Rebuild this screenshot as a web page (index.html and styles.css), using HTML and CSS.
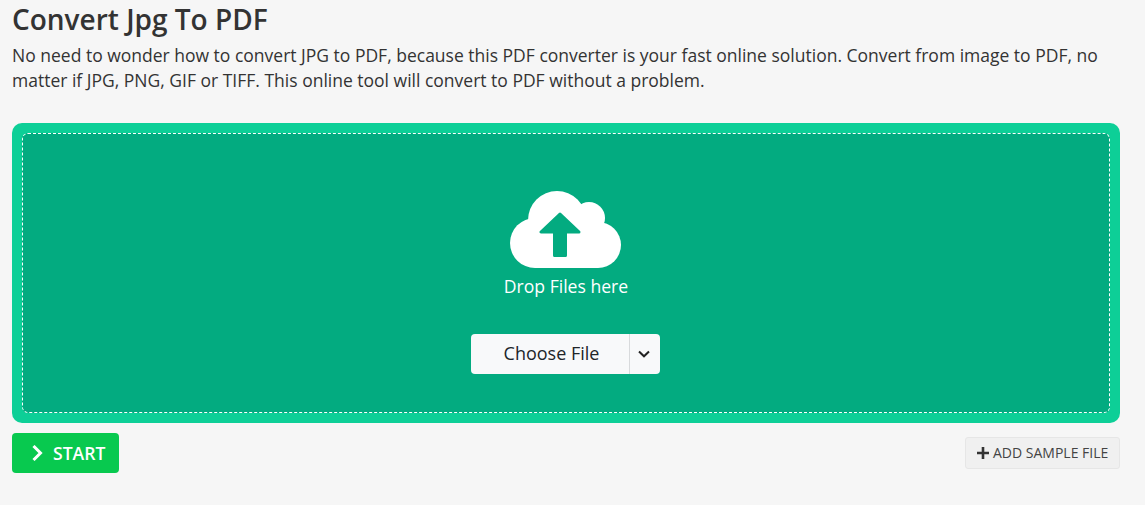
FILE: index.html
```html
<!DOCTYPE html>
<html lang="en">
  <head>
    <meta charset="UTF-8" />
    <meta name="viewport" content="width=device-width, initial-scale=1.0" />
    <title>Convert Jpg To PDF</title>
    <link rel="stylesheet" href="styles.css">
  </head>
  <body>
    <div class="container">
      <h1>Convert Jpg To PDF</h1>
      <p class="intro">
        No need to wonder how to convert JPG to PDF, because this PDF converter is your fast online solution. Convert from image to PDF, no matter if JPG, PNG, GIF or TIFF. This online tool will convert to PDF without a problem.
      </p>

      <div class="dropzone">
        <div class="dropzone-inner">
          <svg class="cloud" width="112" height="78" viewBox="0 0 112 78">
            <g fill="#fff">
              <circle cx="47" cy="29" r="29" />
              <circle cx="79" cy="27" r="16" />
              <circle cx="25" cy="52" r="25" />
              <circle cx="88" cy="54" r="23" />
              <rect x="25" y="40" width="63" height="37" />
            </g>
            <path fill="#03ab80" stroke="#03ab80" stroke-width="3" stroke-linejoin="round" d="M50 23L31 41H44.500V64.500H55.500V41H69Z" />
          </svg>
          <div class="drop-label">Drop Files here</div>
          <div class="choose">
            <button class="choose-btn">Choose File</button>
            <button class="choose-caret">
              <svg width="12" height="8" viewBox="0 0 12 8">
                <path fill="none" stroke="#222" stroke-width="2" d="M1 1.500L6 6.300L11 1.500" />
              </svg>
            </button>
          </div>
        </div>
      </div>

      <div class="actions">
        <button class="start-btn">
          <svg width="11" height="16" viewBox="0 0 11 16">
            <path fill="none" stroke="#fff" stroke-width="3" d="M1.500 1L8.500 8L1.500 15" />
          </svg>
          START
        </button>
        <button class="sample-btn">
          <svg width="12" height="12" viewBox="0 0 12 12">
            <path fill="none" stroke="#333" stroke-width="2.600" d="M6 0V12M0 6H12" />
          </svg>
          ADD SAMPLE FILE
        </button>
      </div>
    </div>
  </body>
</html>
```

FILE: styles.css
```css
:root {
  --page-bg: #f6f6f6;
  --text-color: #333333;
  --zone-border: #0dcf97;
  --zone-bg: #03ab80;
  --start-color: #08c94f;
}

* {
  box-sizing: border-box;
}

body {
  margin: 0;
  background-color: var(--page-bg);
  color: var(--text-color);
  font-family: "Open Sans", sans-serif;
}

.container {
  padding: 0 25px 0 12px;
}

h1 {
  margin: 0 0 5px;
  font-size: 28px;
  font-weight: 600;
  line-height: 38px;
}

.intro {
  margin: 0 0 30px;
  font-size: 17.500px;
  line-height: 25px;
}

.dropzone {
  height: 300px;
  padding: 10px;
  border-radius: 10px;
  background-color: var(--zone-border);
}

.dropzone-inner {
  display: flex;
  flex-direction: column;
  align-items: center;
  height: 100%;
  padding-top: 57px;
  border: 1px dashed #ffffff;
  border-radius: 6px;
  background-color: var(--zone-bg);
}

.cloud {
  display: block;
}

.drop-label {
  margin-top: 4px;
  color: #ffffff;
  font-size: 17.600px;
  font-weight: 500;
  line-height: 27px;
}

.choose {
  display: flex;
  height: 40px;
  margin: 34px 0 0 -1px;
}

.choose button {
  border: none;
  background-color: #f8f9fa;
  color: #212529;
  font-family: inherit;
}

.choose-btn {
  width: 158px;
  padding: 0 0 2px 3px;
  border-radius: 4px 0 0 4px;
  font-size: 18px;
  font-weight: 500;
}

.choose-caret {
  display: flex;
  align-items: center;
  justify-content: center;
  width: 31px;
  padding: 0 2px 0 0;
  border-left: 1px solid #d8dadc !important;
  border-radius: 0 4px 4px 0;
}

.actions {
  display: flex;
  align-items: center;
  justify-content: space-between;
  margin-top: 10px;
}

.start-btn {
  display: flex;
  align-items: center;
  gap: 10px;
  width: 107px;
  height: 40px;
  padding: 0 0 0 20px;
  border: none;
  border-radius: 4px;
  background-color: var(--start-color);
  color: #ffffff;
  font-family: inherit;
  font-size: 17.600px;
  font-weight: 600;
}

.sample-btn {
  display: flex;
  align-items: center;
  gap: 4px;
  width: 155px;
  height: 32px;
  padding: 0 0 1px 11px;
  border: 1px solid #e6e6e6;
  border-radius: 3px;
  background-color: #f0f0f0;
  color: #444444;
  font-family: inherit;
  font-size: 14px;
}
```
